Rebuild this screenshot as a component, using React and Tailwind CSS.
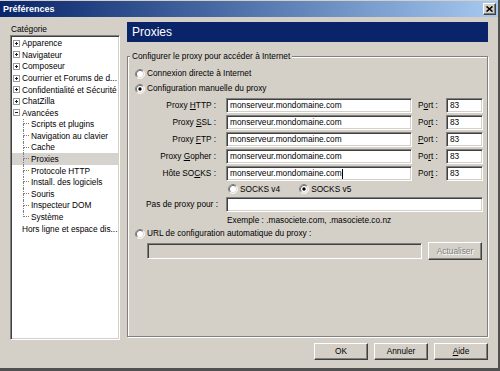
import React from 'react';

const sunken = "border border-t-[#808080] border-l-[#808080] border-r-white border-b-white shadow-[inset_1px_1px_0_#404040,inset_-1px_-1px_0_#d4d0c8]";
const raised = "border border-t-white border-l-white border-r-[#404040] border-b-[#404040] shadow-[inset_-1px_-1px_0_#808080]";

const Radio = ({ checked }) => (
  <svg width="10" height="10" viewBox="0 0 12 12" className="shrink-0">
    <circle cx="6" cy="6" r="5" fill="#fff" />
    <path d="M2.11 9.89A5.5 5.5 0 0 1 9.89 2.11" stroke="#808080" fill="none" />
    <path d="M9.89 2.11A5.5 5.5 0 0 1 2.11 9.89" stroke="#fff" fill="none" />
    <path d="M2.82 9.18A4.5 4.5 0 0 1 9.18 2.82" stroke="#404040" fill="none" />
    <path d="M9.18 2.82A4.5 4.5 0 0 1 2.82 9.18" stroke="#d4d0c8" fill="none" />
    {checked && <circle cx="6" cy="6" r="2" fill="#000" />}
  </svg>
);

const Twisty = ({ open }) => (
  <svg width="7" height="7" viewBox="0 0 7 7" className="shrink-0" shapeRendering="crispEdges">
    <rect x="0.5" y="0.5" width="6" height="6" fill="#fff" stroke="#9a9a9a" />
    <path d="M2 3.5H5" stroke="#202020" />
    {!open && <path d="M3.5 2V5" stroke="#202020" />}
  </svg>
);

const Field = ({ value, w, caret }) => (
  <div className={`${sunken} ${w} h-[15px] bg-white flex items-center pl-[3px]`}>
    {value}
    {caret && <span className="w-px h-[10px] bg-black" />}
  </div>
);

const U = ({ children }) => <span className="underline underline-offset-1">{children}</span>;

const top = ['Apparence', 'Navigateur', 'Composeur', 'Courrier et Forums de d...', 'Confidentialité et Sécurité', 'ChatZilla'];
const kids = ['Scripts et plugins', 'Navigation au clavier', 'Cache', 'Proxies', 'Protocole HTTP', 'Install. des logiciels', 'Souris', 'Inspecteur DOM', 'Système'];

const proxies = [
  [<>Proxy <U>H</U>TTP :</>, <>P<U>o</U>rt :</>],
  [<>Proxy <U>S</U>SL :</>, <>Po<U>r</U>t :</>],
  [<>Proxy <U>F</U>TP :</>, <><U>P</U>ort :</>],
  [<>Proxy <U>G</U>opher :</>, <>Po<U>r</U>t :</>],
  [<>Hôte SO<U>C</U>KS :</>, <>Por<U>t</U> :</>],
];

export default function App() {
  return (
    <div className="w-[500px] h-[371px] bg-[#d4d0c8] flex flex-col border-r-2 border-b-[3px] border-r-[#505050] border-b-[#505050] font-['Liberation_Sans',Arial,sans-serif] text-[8.3px] leading-none text-black overflow-hidden">
      <div className="mt-px h-[16px] flex items-center justify-between pl-[3px] pr-[2px] bg-gradient-to-r from-[#0a246a] to-[#a6caf0]">
        <span className="text-white font-bold text-[9px]">Préférences</span>
        <div className={`${raised} w-[13px] h-[12px] bg-[#d4d0c8] flex items-center justify-center`}>
          <svg width="7" height="6" viewBox="0 0 7 6"><path d="M0.5 0.5L6.5 5.5M6.5 0.5L0.5 5.5" stroke="#000" strokeWidth="1.6" /></svg>
        </div>
      </div>

      <div className="flex gap-[7px] pl-[10px]">
        <div className="w-[110px] flex flex-col">
          <div className="mt-[6px] h-[12px] flex items-center pl-px">Catégorie</div>
          <div className={`${sunken} h-[305px] bg-white p-px pt-[1.5px] flex flex-col`}>
            {top.map(t => (
              <div key={t} className="h-[11.6px] flex items-center pl-[1px] gap-[2px] whitespace-nowrap">
                <Twisty />
                <span>{t}</span>
              </div>
            ))}
            <div className="h-[11.6px] flex items-center pl-[1px] gap-[2px]">
              <Twisty open />
              <span>Avancées</span>
            </div>
            {kids.map((k, i) => (
              <div key={k} className={`h-[11.6px] flex items-center pl-[11px] ${k === 'Proxies' ? 'bg-[#d6d3ce]' : ''}`}>
                <div className="w-[6px] h-full flex flex-col">
                  <div className="h-1/2 border-l border-b border-dotted border-[#808080]" />
                  <div className={`h-1/2 ${i < kids.length - 1 ? 'border-l border-dotted border-[#808080]' : ''}`} />
                </div>
                <span className="ml-[2px] whitespace-nowrap">{k}</span>
              </div>
            ))}
            <div className="h-[11.6px] flex items-center pl-[10px] whitespace-nowrap">Hors ligne et espace dis...</div>
          </div>
        </div>

        <div className="w-[361px] flex flex-col">
          <div className="mt-[5px] h-[20px] bg-[#0a246a] text-white text-[12px] flex items-center pl-[5px]">Proxies</div>

          <div className="mt-[14px] h-[281px] border border-[#808080] shadow-[inset_1px_1px_0_#fff,1px_1px_0_#fff] flex flex-col">
            <div className="-mt-[7px] ml-[2px] px-[2px] h-[12px] w-fit bg-[#d4d0c8] flex items-center">Configurer le proxy pour accéder à Internet</div>

            <div className="mt-[4px] h-[15px] flex items-center pl-[7px] gap-[2px]">
              <Radio />
              <span>Connexion directe à Internet</span>
            </div>
            <div className="h-[15px] flex items-center pl-[7px] gap-[2px]">
              <Radio checked />
              <span>Configuration manuelle du proxy</span>
            </div>

            <div className="mt-px flex flex-col">
              {proxies.map(([label, port], i) => (
                <div key={i} className="h-[17px] flex items-center">
                  <div className="w-[88px] text-right">{label}</div>
                  <div className="ml-[10px]">
                    <Field w="w-[186px]" value="monserveur.mondomaine.com" caret={i === 4} />
                  </div>
                  <div className="ml-[6px] w-[28px]">{port}</div>
                  <Field w="w-[37px]" value="83" />
                </div>
              ))}
            </div>

            <div className="h-[14px] flex items-center pl-[100px]">
              <Radio />
              <span className="ml-[2px]">SOCKS v4</span>
              <span className="ml-[19px]"><Radio checked /></span>
              <span className="ml-[2px]">SOCKS v5</span>
            </div>

            <div className="h-[17px] flex items-center">
              <div className="w-[90px] text-right">Pas de proxy pour :</div>
              <div className="ml-[8px]">
                <Field w="w-[257px]" value="" />
              </div>
            </div>

            <div className="h-[14px] flex items-center pl-[99px]">Exemple : .masociete.com, .masociete.co.nz</div>

            <div className="h-[13px] flex items-center pl-[7px] gap-[2px]">
              <Radio />
              <span>URL de configuration automatique du proxy :</span>
            </div>

            <div className="mt-[2px] h-[18px] flex items-center pl-[19px] gap-[6px]">
              <div className={`${sunken} w-[275px] h-[16px] bg-[#d4d0c8]`} />
              <div className={`${raised} w-[54px] h-[18px] bg-[#d4d0c8] flex items-center justify-center text-[#808080] [text-shadow:1px_1px_0_#fff]`}>Actualiser</div>
            </div>
          </div>

          <div className="mt-[6px] flex justify-end gap-[6px]">
            <div className={`${raised} w-[54px] h-[17px] flex items-center justify-center`}>OK</div>
            <div className={`${raised} w-[54px] h-[17px] flex items-center justify-center`}>Annuler</div>
            <div className={`${raised} w-[54px] h-[17px] flex items-center justify-center`}><U>A</U>ide</div>
          </div>
        </div>
      </div>
    </div>
  );
}
